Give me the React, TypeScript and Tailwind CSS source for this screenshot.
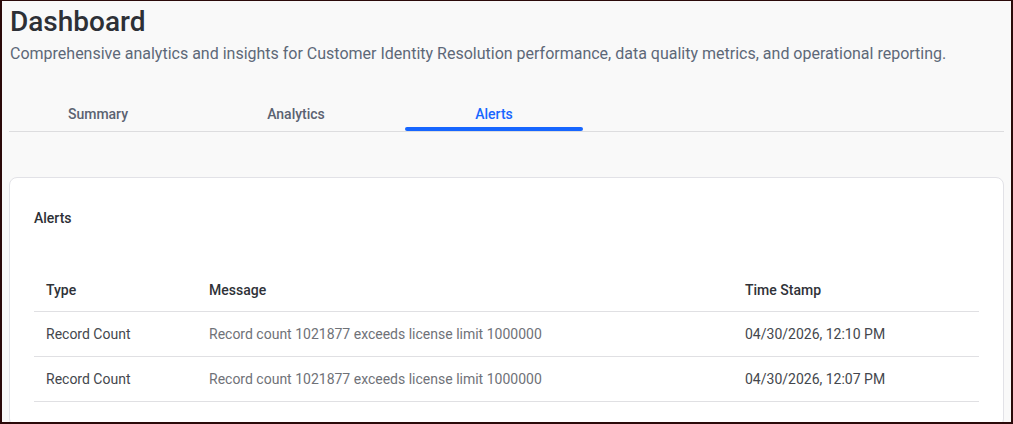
import { useState } from "react";

type Alert = {
  type: string;
  message: string;
  timestamp: string;
};

const alerts: Alert[] = [
  {
    type: "Record Count",
    message: "Record count 1021877 exceeds license limit 1000000",
    timestamp: "04/30/2026, 12:10 PM",
  },
  {
    type: "Record Count",
    message: "Record count 1021877 exceeds license limit 1000000",
    timestamp: "04/30/2026, 12:07 PM",
  },
];

const tabs = ["Summary", "Analytics", "Alerts"];

export default function App() {
  const [activeTab, setActiveTab] = useState<string>("Alerts");

  return (
    <div
      className="h-[424px] w-full overflow-hidden bg-[#f9f9f9] border-t border-x-2 border-b-2 border-[#2b0a0a] px-[7px]"
      style={{ fontFamily: "Roboto, 'Liberation Sans', sans-serif" }}
    >
      {/* Page header */}
      <h1 className="pt-1 pl-px text-[28px] leading-[34px] font-medium text-[#2d3036]">
        Dashboard
      </h1>
      <p className="mt-[3px] pl-px text-base leading-6 text-[#5d6878]">
        Comprehensive analytics and insights for Customer Identity Resolution performance, data quality metrics, and
        operational reporting.
      </p>

      {/* Tabs */}
      <div className="mt-[31px] flex gap-5 border-b border-[#dddddf]">
        {tabs.map((tab) => {
          const isActive = tab === activeTab;
          return (
            <button
              key={tab}
              onClick={() => setActiveTab(tab)}
              className={`relative flex h-[34px] w-[178px] items-center justify-center text-sm font-medium ${
                isActive ? "text-[#1766ff]" : "text-[#5b6271]"
              }`}
            >
              {tab}
              {isActive && (
                <span className="absolute bottom-0 left-0 right-0 h-1 rounded-full bg-[#1766ff]" />
              )}
            </button>
          );
        })}
      </div>

      {/* Alerts card */}
      <div className="mt-[45px] rounded-lg border border-[#e2e2e7] bg-white px-6 pt-[30px] pb-6">
        <h2 className="text-sm leading-5 font-medium text-[#2d3036]">Alerts</h2>

        <table className="mt-[38px] w-full table-fixed border-collapse text-sm">
          <colgroup>
            <col className="w-[163px]" />
            <col className="w-[536px]" />
            <col />
          </colgroup>
          <thead>
            <tr className="h-[45px] border-b border-[#e0e0e3]">
              <th className="px-3 pt-1 text-left font-medium text-[#2f3238]">Type</th>
              <th className="px-3 pt-1 text-left font-medium text-[#2f3238]">Message</th>
              <th className="px-3 pt-1 text-left font-medium text-[#2f3238]">Time Stamp</th>
            </tr>
          </thead>
          <tbody>
            {alerts.map((alert, i) => (
              <tr key={i} className="h-[45px] border-b border-[#e0e0e3]">
                <td className="px-3 text-[#44474d]">{alert.type}</td>
                <td className="px-3 text-[#6f7278]">{alert.message}</td>
                <td className="px-3 text-[#44474d]">{alert.timestamp}</td>
              </tr>
            ))}
          </tbody>
        </table>
      </div>
    </div>
  );
}
